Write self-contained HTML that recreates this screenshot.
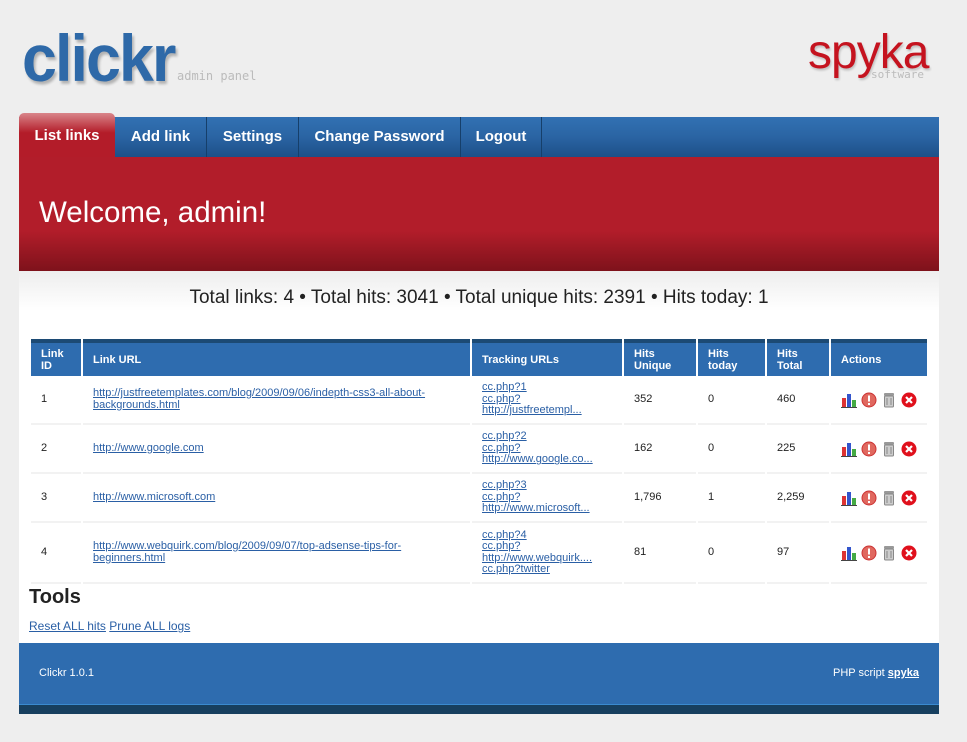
<!DOCTYPE html>
<html><head><style>
*{margin:0;padding:0;box-sizing:border-box}
body{width:967px;height:742px;background:#eee;font-family:"Liberation Sans",Arial,sans-serif;position:relative;overflow:hidden}
.abs{position:absolute}
a{color:#2a5fa5}
.logo{left:22px;top:28px;font-size:66px;font-weight:bold;color:#2e69a8;letter-spacing:-2px;transform:scaleX(0.95);transform-origin:left;text-shadow:2px 3px 3px rgba(0,0,0,.25);line-height:60px}
.sub{font-family:"DejaVu Sans Mono",monospace;color:#bbb;font-size:12px}
.spyka{left:808px;top:30px;font-size:48px;color:#c5131f;letter-spacing:-1px;transform:scaleX(1);transform-origin:left;line-height:46px;text-shadow:1px 2px 2px rgba(0,0,0,.2)}
.nav{left:19px;top:117px;width:920px;height:40px;background:linear-gradient(#3271b3,#2a64a3 50%,#1d5088)}
.nav div{position:absolute;top:0;height:40px;color:#fff;font-weight:bold;font-size:15px;line-height:40px;text-align:center;border-right:1px solid #163f6a}
.tab{left:19px;top:113px;width:96px;height:44px;background:linear-gradient(#d9858a,#b31c29 45%);border-radius:5px 5px 0 0;color:#fff;font-weight:bold;font-size:15px;line-height:46px;text-align:center}
.banner{left:19px;top:157px;width:920px;height:114px;background:linear-gradient(#b21d2a 0,#b21d2a 65%,#7e121b 100%)}
.content{left:19px;top:271px;width:920px;height:372px;background:linear-gradient(#eee,#fff 40px)}
table{position:absolute;left:29px;top:339px;border-collapse:separate;border-spacing:2px 0;font-size:11px;table-layout:fixed;width:900px}
th{background:#2e6caf;color:#fff;text-align:left;font-size:11px;border-top:4px solid #1c4a74;height:37px;padding:0 10px;vertical-align:middle;line-height:12px}
td{border-bottom:2px solid #f2f2f2;padding:0 10px;vertical-align:middle;color:#222;line-height:11.5px;overflow:hidden}
td.act{padding:0 0 0 10px;white-space:nowrap;font-size:0}
.ic{display:inline-block;width:16px;height:16px;vertical-align:middle;margin-right:4px}
.footer{left:19px;top:643px;width:920px;height:61px;background:#2e6caf;color:#fff;font-size:11px}
.fb{left:19px;top:704px;width:920px;height:10px;background:#173f5f;border-top:1px solid #3a8ad0}
</style></head><body>
<div class="abs logo">clickr</div>
<div class="abs sub" style="left:177px;top:69px">admin panel</div>
<div class="abs spyka">spyka</div>
<div class="abs sub" style="left:871px;top:68px;font-size:11px">software</div>
<div class="abs nav">
<div style="left:96px;width:92px">Add link</div>
<div style="left:188px;width:92px">Settings</div>
<div style="left:280px;width:162px">Change Password</div>
<div style="left:442px;width:81px">Logout</div>
</div>
<div class="abs tab">List links</div>
<div class="abs banner"><div style="position:absolute;left:20px;top:39px;color:#fff;font-size:29.5px">Welcome, admin!</div></div>
<div class="abs content"></div>
<div class="abs" style="left:19px;top:287px;width:920px;text-align:center;font-size:19px;color:#222">Total links: 4 • Total hits: 3041 • Total unique hits: 2391 • Hits today: 1</div>
<table>
<colgroup><col style="width:50px"><col style="width:387px"><col style="width:150px"><col style="width:72px"><col style="width:67px"><col style="width:62px"><col style="width:96px"></colgroup>
<tr><th>Link<br>ID</th><th>Link URL</th><th>Tracking URLs</th><th>Hits<br>Unique</th><th>Hits<br>today</th><th>Hits<br>Total</th><th>Actions</th></tr>
<tr style="height:49px"><td>1</td><td><a href="#">http://justfreetemplates.com/blog/2009/09/06/indepth-css3-all-about-backgrounds.html</a></td><td><a href="#">cc.php?1</a><br><a href="#">cc.php?</a><br><a href="#">http://justfreetempl...</a></td><td>352</td><td>0</td><td>460</td><td class="act"></td></tr>
<tr style="height:49px"><td>2</td><td><a href="#">http://www.google.com</a></td><td><a href="#">cc.php?2</a><br><a href="#">cc.php?</a><br><a href="#">http://www.google.co...</a></td><td>162</td><td>0</td><td>225</td><td class="act"></td></tr>
<tr style="height:49px"><td>3</td><td><a href="#">http://www.microsoft.com</a></td><td><a href="#">cc.php?3</a><br><a href="#">cc.php?</a><br><a href="#">http://www.microsoft...</a></td><td>1,796</td><td>1</td><td>2,259</td><td class="act"></td></tr>
<tr style="height:61px"><td>4</td><td><a href="#">http://www.webquirk.com/blog/2009/09/07/top-adsense-tips-for-beginners.html</a></td><td><a href="#">cc.php?4</a><br><a href="#">cc.php?</a><br><a href="#">http://www.webquirk....</a><br><a href="#">cc.php?twitter</a></td><td>81</td><td>0</td><td>97</td><td class="act"></td></tr>
</table>
<div class="abs" style="left:29px;top:586px;font-size:20px;font-weight:bold;color:#222">Tools</div>
<div class="abs" style="left:29px;top:619px;font-size:12px"><a href="#">Reset ALL hits</a> <a href="#">Prune ALL logs</a></div>
<div class="abs footer"><span style="position:absolute;left:20px;top:24px">Clickr 1.0.1</span><span style="position:absolute;right:20px;top:24px">PHP script <a href="#" style="color:#fff;font-weight:bold">spyka</a></span></div>
<div class="abs fb"></div>
<script>
var svg='<svg class="ic" viewBox="0 0 16 16"><rect x="1" y="6" width="4" height="9" fill="#d33"/><rect x="6" y="2" width="4" height="13" fill="#35c"/><rect x="11" y="8" width="4" height="7" fill="#4a4"/><rect x="0" y="15" width="16" height="1" fill="#444"/></svg>'+
'<svg class="ic" viewBox="0 0 16 16"><circle cx="8" cy="8" r="7" fill="#e0685f" stroke="#c33"/><rect x="7" y="3.5" width="2" height="6" fill="#fff"/><rect x="7" y="11" width="2" height="2" fill="#fff"/></svg>'+
'<svg class="ic" viewBox="0 0 16 16"><rect x="3" y="1" width="10" height="3" rx="1" fill="#999"/><rect x="3.5" y="4" width="9" height="11" rx="1" fill="#ccc" stroke="#888"/><line x1="6" y1="6" x2="6" y2="13" stroke="#888"/><line x1="10" y1="6" x2="10" y2="13" stroke="#888"/></svg>'+
'<svg class="ic" viewBox="0 0 16 16"><circle cx="8" cy="8" r="7.5" fill="#e0101c"/><path d="M5 5L11 11M11 5L5 11" stroke="#fff" stroke-width="2.2"/></svg>';
document.querySelectorAll('.act').forEach(function(e){e.innerHTML=svg});
</script>
</body></html>
